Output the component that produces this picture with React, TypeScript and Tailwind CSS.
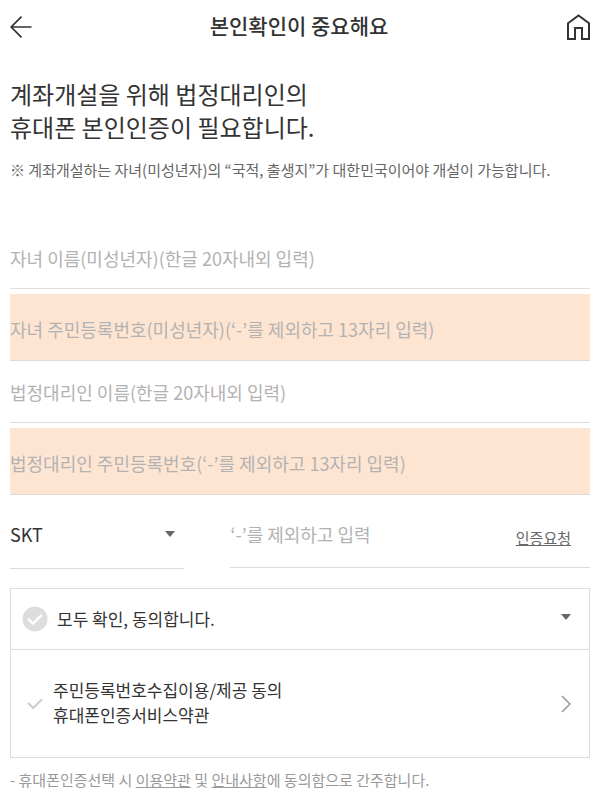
import { useState } from "react";

const FIELDS = [
  {
    id: "child-name",
    placeholder: "자녀 이름(미성년자)(한글 20자내외 입력)",
    highlighted: false,
  },
  {
    id: "child-rrn",
    placeholder: "자녀 주민등록번호(미성년자)(‘-’를 제외하고 13자리 입력)",
    highlighted: true,
  },
  {
    id: "guardian-name",
    placeholder: "법정대리인 이름(한글 20자내외 입력)",
    highlighted: false,
  },
  {
    id: "guardian-rrn",
    placeholder: "법정대리인 주민등록번호(‘-’를 제외하고 13자리 입력)",
    highlighted: true,
  },
];

const CARRIERS = ["SKT", "KT", "LG U+"];

function Caret({ className }: { className?: string }) {
  return (
    <svg viewBox="0 0 10 6" className={className} aria-hidden="true">
      <path d="M0 0h10L5 6z" fill="#666" />
    </svg>
  );
}

function Header() {
  return (
    <header className="flex h-[54px] items-center justify-between">
      <button type="button" aria-label="뒤로">
        <svg width="22" height="22" viewBox="0 0 22 22" fill="none" stroke="#333" strokeWidth="1.7">
          <path d="M21.5 11H1.2M11.5.7 1.2 11l10.3 10.3" />
        </svg>
      </button>
      <h1 className="pb-1 text-[21px] font-medium leading-8">본인확인이 중요해요</h1>
      <a href="#home" aria-label="홈">
        <svg width="24" height="26" viewBox="0 0 24 26" fill="none" stroke="#333" strokeWidth="2">
          <path d="M2 9.3 12.5 1.5 23 9.3V25h-7V14H9v11H2z" />
        </svg>
      </a>
    </header>
  );
}

function Fields() {
  return (
    <div className="mt-[45px]">
      {FIELDS.map((field) => (
        <div key={field.id} className={field.highlighted ? "mt-[5px]" : ""}>
          <input
            id={field.id}
            type="text"
            aria-label={field.placeholder}
            placeholder={field.placeholder}
            className={
              field.highlighted
                ? "block h-[67px] w-full border-b border-[#ddd] bg-[#fee5d2] pt-1 text-lg outline-none placeholder:text-[#b2b2b2]"
                : "block h-[62px] w-full border-b border-[#ddd] text-lg outline-none placeholder:text-[#b2b2b2]"
            }
          />
        </div>
      ))}
    </div>
  );
}

function PhoneRow() {
  return (
    <div className="flex items-start justify-between">
      <div className="relative w-[30%]">
        <select
          id="carrier"
          aria-label="통신사"
          className="block h-[74px] w-full appearance-none border-b border-[#ddd] bg-transparent pt-1 text-lg outline-none"
        >
          {CARRIERS.map((carrier) => (
            <option key={carrier}>{carrier}</option>
          ))}
        </select>
        <Caret className="pointer-events-none absolute right-[9px] top-9 h-[6px] w-[10px]" />
      </div>
      <div className="flex h-[73px] w-[62%] items-center border-b border-[#ddd] pt-1.5">
        <input
          id="phone"
          type="tel"
          aria-label="휴대폰 번호"
          placeholder="‘-’를 제외하고 입력"
          className="min-w-0 flex-1 text-lg outline-none placeholder:text-[#b2b2b2]"
        />
        <button type="button" className="mr-[19px] mt-2 text-[15px] text-[#666] underline">
          인증요청
        </button>
      </div>
    </div>
  );
}

function Agreements() {
  const [all, setAll] = useState(false);
  const [terms, setTerms] = useState(false);

  const toggleAll = () => {
    setAll(!all);
    setTerms(!all);
  };

  return (
    <section className="mt-[19px] border border-[#ddd]">
      <div className="flex h-[61px] items-center border-b border-[#ddd] pl-[11px] pr-[18px]">
        <label className="flex flex-1 cursor-pointer items-center gap-[9px] text-[17px] leading-6">
          <input type="checkbox" checked={all} onChange={toggleAll} className="sr-only" />
          <svg
            width="26"
            height="26"
            viewBox="0 0 26 26"
            fill="none"
            className={all ? "text-[#f58220]" : "text-[#ddd]"}
            aria-hidden="true"
          >
            <circle cx="13" cy="13" r="12.5" fill="currentColor" />
            <path d="m6 12.6 5 5 8.7-8.8" stroke="#fff" strokeWidth="2.4" />
          </svg>
          모두 확인, 동의합니다.
        </label>
        <button type="button" aria-label="약관 접기" className="pb-1">
          <Caret className="h-[6px] w-[10px]" />
        </button>
      </div>
      <div className="flex h-[107px] items-center pl-4 pr-[18px]">
        <label className="flex flex-1 cursor-pointer items-center gap-[10px] text-[17px] leading-[25px]">
          <input
            type="checkbox"
            checked={terms}
            onChange={() => setTerms(!terms)}
            className="sr-only"
          />
          <svg
            width="16"
            height="12"
            viewBox="0 0 16 12"
            fill="none"
            stroke="currentColor"
            strokeWidth="2"
            className={terms ? "text-[#f58220]" : "text-[#ccc]"}
            aria-hidden="true"
          >
            <path d="m1 4.8 5.2 5.3L15 1.3" />
          </svg>
          <span className="pb-1">
            주민등록번호수집이용/제공 동의
            <br />
            휴대폰인증서비스약관
          </span>
        </label>
        <button type="button" aria-label="약관 보기">
          <svg width="10" height="18" viewBox="0 0 10 18" fill="none" stroke="#888" strokeWidth="1.2">
            <path d="m1 1 8 8-8 8" />
          </svg>
        </button>
      </div>
    </section>
  );
}

export default function App() {
  return (
    <main className="bg-white pb-3 pl-[10px] pr-[9px] font-['Noto_Sans_CJK_KR',sans-serif] text-[#333]">
      <Header />
      <h2 className="mt-[23px] text-2xl font-normal leading-[33px]">
        계좌개설을 위해 법정대리인의
        <br />
        휴대폰 본인인증이 필요합니다.
      </h2>
      <p className="mt-[15px] text-[15px] leading-6 text-[#666]">
        ※ 계좌개설하는 자녀(미성년자)의 “국적, 출생지”가 대한민국이어야 개설이 가능합니다.
      </p>
      <form onSubmit={(e) => e.preventDefault()}>
        <Fields />
        <PhoneRow />
        <Agreements />
      </form>
      <p className="mt-[10px] text-[15px] leading-6 text-[#999]">
        - 휴대폰인증선택 시{" "}
        <a href="#terms" className="underline">
          이용약관
        </a>{" "}
        및{" "}
        <a href="#notice" className="underline">
          안내사항
        </a>
        에 동의함으로 간주합니다.
      </p>
    </main>
  );
}
